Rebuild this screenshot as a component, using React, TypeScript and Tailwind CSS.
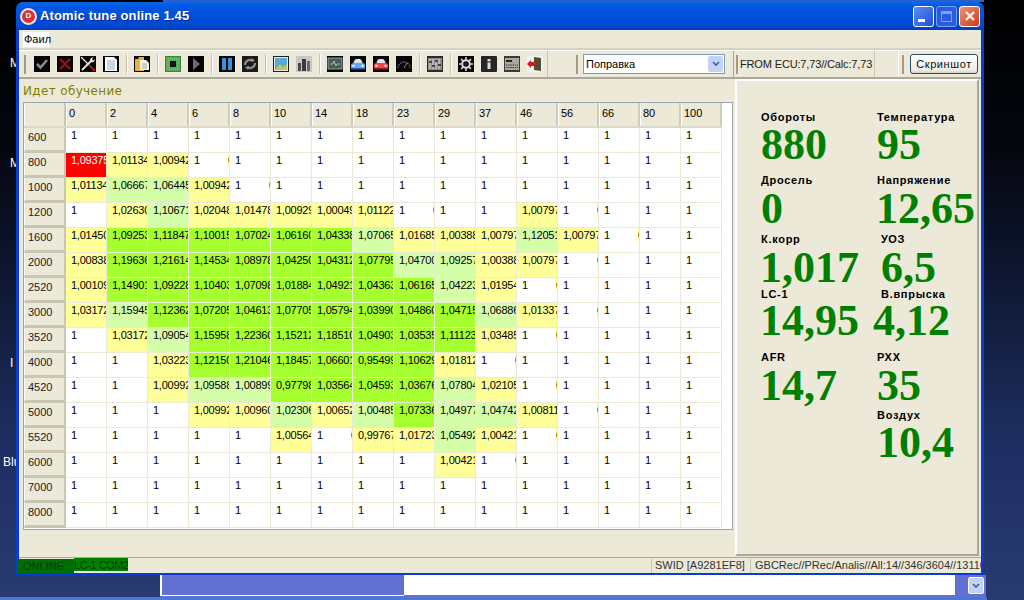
import React from "react";

const headers = ["0","2","4","6","8","10","14","18","23","29","37","46","56","66","80","100"];
type C = [string, string?, number?];
const one = (n: number): C[] => Array.from({ length: n }, () => ["1"] as C);
const rows: [string, C[]][] = [
  ["600", one(16)],
  ["800", [["1,09375","r"],["1,01134","y"],["1,00942","y"],["1",undefined,1],...one(12)]],
  ["1000", [["1,01134","y"],["1,06667","l"],["1,06445","l"],["1,00942","y"],["1",undefined,1],...one(11)]],
  ["1200", [["1"],["1,02630","y"],["1,10671","l"],["1,02048","y"],["1,01478","y"],["1,00929","y"],["1,00049","y"],["1,01122","y"],["1",undefined,1],["1"],["1"],["1,00797","y"],["1",undefined,1],["1"],["1"],["1"]]],
  ["1600", [["1,01450","y"],["1,09253","g"],["1,11847","g"],["1,10015","g"],["1,07024","g"],["1,06160","g"],["1,04338","g"],["1,07065","l"],["1,01685","y"],["1,00388","y"],["1,00797","y"],["1,12051","l"],["1,00797","y"],["1",undefined,1],["1"],["1"]]],
  ["2000", [["1,00838","y"],["1,19636","g"],["1,21614","g"],["1,14534","g"],["1,08978","g"],["1,04250","g"],["1,04312","g"],["1,07795","g"],["1,04700","l"],["1,09257","l"],["1,00388","y"],["1,00797","y"],["1",undefined,1],["1"],["1"],["1"]]],
  ["2520", [["1,00109","y"],["1,14901","g"],["1,09228","g"],["1,10403","g"],["1,07098","g"],["1,01884","g"],["1,04921","g"],["1,04363","g"],["1,06165","g"],["1,04223","l"],["1,01954","y"],["1",undefined,1],["1"],["1"],["1"],["1"]]],
  ["3000", [["1,03172","y"],["1,15945","l"],["1,12362","g"],["1,07205","g"],["1,04613","g"],["1,07705","g"],["1,05794","g"],["1,03990","g"],["1,04860","g"],["1,04715","g"],["1,06886","l"],["1,01337","y"],["1",undefined,1],["1"],["1"],["1"]]],
  ["3520", [["1"],["1,03172","y"],["1,09054","l"],["1,15958","g"],["1,22360","g"],["1,15212","g"],["1,18510","g"],["1,04903","g"],["1,03535","g"],["1,11123","g"],["1,03485","y"],["1",undefined,1],["1"],["1"],["1"],["1"]]],
  ["4000", [["1"],["1"],["1,03223","y"],["1,12150","g"],["1,21046","g"],["1,18457","g"],["1,06601","g"],["0,95499","g"],["1,10629","g"],["1,01812","y"],["1",undefined,1],["1"],["1"],["1"],["1"],["1"]]],
  ["4520", [["1"],["1"],["1,00992","y"],["1,09588","l"],["1,00899","l"],["0,97798","g"],["1,03564","g"],["1,04593","g"],["1,03676","g"],["1,07804","l"],["1,02105","y"],["1",undefined,1],["1"],["1"],["1"],["1"]]],
  ["5000", [["1"],["1"],["1"],["1,00992","y"],["1,00960","y"],["1,02306","l"],["1,00652","y"],["1,00485","l"],["1,07336","g"],["1,04977","l"],["1,04742","l"],["1,00811","y"],["1",undefined,1],["1"],["1"],["1"]]],
  ["5520", [["1"],["1"],["1"],["1"],["1"],["1,00564","y"],["1",undefined,1],["0,99767","y"],["1,01723","y"],["1,05492","l"],["1,00421","y"],["1",undefined,1],["1"],["1"],["1"],["1"]]],
  ["6000", [["1"],["1"],["1"],["1"],["1"],["1"],["1"],["1"],["1"],["1,00421","y"],["1",undefined,1],["1"],["1"],["1"],["1"],["1"]]],
  ["7000", one(16)],
  ["8000", one(16)],
];
const bg: Record<string, string> = {
  r: "bg-[#ff0000] text-white",
  y: "bg-[#ffff99] text-black",
  l: "bg-[#d4ffa8] text-black",
  g: "bg-[#a6ff2e] text-black",
};

function Ico({ n }: { n: string }) {
  const s = "w-4 h-4 shrink-0";
  const box = <rect width="16" height="16" fill="#050505" />;
  switch (n) {
    case "check": return <svg viewBox="0 0 16 16" className={s}>{box}<path d="M3 8l3.5 3.5L13 4" fill="none" stroke="#8a8a8a" strokeWidth="2.6" /></svg>;
    case "x": return <svg viewBox="0 0 16 16" className={s}>{box}<path d="M3 3l10 10M13 3L3 13" fill="none" stroke="#9c1016" strokeWidth="2.4" /></svg>;
    case "tools": return <svg viewBox="0 0 16 16" className={s}>{box}<path d="M1 1l7 7" stroke="#e8e8e8" strokeWidth="1.3" /><path d="M8 8l7 7" stroke="#d81818" strokeWidth="1.6" /><path d="M2 14l9-9" stroke="#e8e8e8" strokeWidth="1.8" /><path d="M10 5a3 3 0 013.5-3.5L12 3.5l1 1 2-1.2A3 3 0 0111 6" fill="#e8e8e8" /></svg>;
    case "doc": return <svg viewBox="0 0 16 16" className={s}>{box}<path d="M2 1h9l3 3v11H2z" fill="#fff" /><path d="M4 5h8M4 7h8M4 9h8M4 11h8M4 13h8" stroke="#9aa8d8" strokeWidth="1" /></svg>;
    case "folder": return <svg viewBox="0 0 16 16" className={s}>{box}<path d="M1 3h3l1-2h5v14H1z" fill="#e8b040" /><path d="M6 4h6l3 3v7H6z" fill="#f4f4ec" /><path d="M8 8h5M8 10h5M8 12h5" stroke="#9ab09a" /></svg>;
    case "chip": return <svg viewBox="0 0 16 16" className={s}><rect width="16" height="16" fill="#2f8a3a" /><rect x="1" y="1" width="14" height="14" fill="#5aa860" /><rect x="5" y="5" width="6" height="6" fill="#151515" /><path d="M3 3h10v10H3z" fill="none" stroke="#bfe0b0" strokeWidth=".6" strokeDasharray="1 1" /></svg>;
    case "play": return <svg viewBox="0 0 16 16" className={s}>{box}<path d="M5 2l7 6-7 6z" fill="#6a6a6a" /></svg>;
    case "pause": return <svg viewBox="0 0 16 16" className={s}>{box}<rect x="3" y="2" width="4" height="12" fill="#3a8ee0" /><rect x="9" y="2" width="4" height="12" fill="#3a8ee0" /></svg>;
    case "refresh": return <svg viewBox="0 0 16 16" className={s}><rect width="16" height="16" fill="#1a1a1a" /><path d="M3 9a5 5 0 018-4M13 7a5 5 0 01-8 4" fill="none" stroke="#8c8c8c" strokeWidth="2.2" /><path d="M10 2l3 3-4 1zM6 14l-3-3 4-1z" fill="#8c8c8c" /></svg>;
    case "image": return <svg viewBox="0 0 16 16" className={s}><rect width="16" height="16" fill="#202020" /><rect x="1" y="1" width="14" height="14" fill="#e8e8e0" /><rect x="2" y="2" width="12" height="12" fill="#58a8d8" /><path d="M2 14l5-6 3 3 4-3v6z" fill="#b8c860" /></svg>;
    case "bars": return <svg viewBox="0 0 16 16" className={s}><rect width="16" height="16" fill="#c8c8c8" /><rect x="2" y="7" width="3" height="8" fill="#4a4a4a" /><rect x="6" y="3" width="4" height="12" fill="#3a3a3a" /><rect x="11" y="5" width="3" height="10" fill="#6a6a6a" /></svg>;
    case "mon": return <svg viewBox="0 0 16 16" className={s}>{box}<rect x="1" y="2" width="14" height="11" fill="#4a5a58" stroke="#c8c8c8" strokeWidth=".7" /><path d="M3 8h3l1-3 2 5 1-2h3" fill="none" stroke="#7fe0a0" strokeWidth=".9" /></svg>;
    case "carb": case "carr": {
      const c = n === "carb" ? "#6aa4ec" : "#ec4a40";
      const d = n === "carb" ? "#2a5ab0" : "#a81818";
      return <svg viewBox="0 0 16 16" className={s}>{box}<path d="M3.5 7q1-4 3-4h3q2 0 3 4z" fill="#dfe4f0" /><path d="M1 9q0-2 3-2h8q3 0 3 2v3H1z" fill={c} /><path d="M1 12h14v1.5H1z" fill={d} /><ellipse cx="3.5" cy="9.7" rx="1.3" ry="1" fill="#fff" /><ellipse cx="12.5" cy="9.7" rx="1.3" ry="1" fill="#fff" /></svg>;
    }
    case "gauge": return <svg viewBox="0 0 16 16" className={s}>{box}<path d="M2 12a6 6 0 0112 0" fill="none" stroke="#6a6a6a" strokeWidth="1.4" strokeDasharray="1.5 1" /><path d="M8 12l3-5" stroke="#888" strokeWidth="1" /></svg>;
    case "sliders": return <svg viewBox="0 0 16 16" className={s}><rect width="16" height="16" fill="#2a2a2a" /><rect x="1" y="2" width="14" height="12" fill="#8c8c8c" /><path d="M3 3v10M6 3v10M9 3v10M12 3v10" stroke="#e8e8e8" strokeWidth=".9" /><path d="M2 6h3M5 10h3M8 5h3M11 9h3" stroke="#222" strokeWidth="1.3" /></svg>;
    case "gear": return <svg viewBox="0 0 16 16" className={s}>{box}<circle cx="8" cy="8" r="3.8" fill="none" stroke="#dcdcdc" strokeWidth="2" /><path d="M8 1v14M1 8h14M3 3l10 10M13 3L3 13" stroke="#dcdcdc" strokeWidth="1.6" strokeDasharray="2.6 8.8" /><circle cx="8" cy="8" r="1.6" fill="#222" /></svg>;
    case "info": return <svg viewBox="0 0 16 16" className={s}><rect width="16" height="16" rx="1" fill="#262626" /><rect x="6.5" y="3" width="3" height="2.4" fill="#e0e0e0" /><rect x="6.5" y="6.5" width="3" height="6.5" fill="#e0e0e0" /></svg>;
    case "card": return <svg viewBox="0 0 16 16" className={s}><rect width="16" height="16" fill="#3a3a3a" /><rect x="1" y="2" width="14" height="12" fill="#a8a8a0" /><rect x="2" y="4" width="6" height="2" fill="#222" /><path d="M2 9h12M2 11.5h12" stroke="#3a3a3a" strokeDasharray="1.4 .8" /></svg>;
    default: return <svg viewBox="0 0 16 16" className={s}><rect width="16" height="16" fill="#f2f2f2" /><path d="M7 1l7 1v13l-7-1z" fill="#505030" /><path d="M0 8l4-4v2h5v4H4v2z" fill="#d81818" /></svg>;
  }
}

const Sep = () => <div className="w-px h-[20px] bg-[#c5c2b0] border-r border-white mx-[3px] box-content" />;
const Grip = () => <div className="w-[2px] h-[19px] shrink-0 [background-image:radial-gradient(#a09c88_1px,transparent_1px)] [background-size:2px_4px]" />;

function Metric({ label, value, lx = 0, vx = 0, vy = 0, h }: { label: string; value: string; lx?: number; vx?: number; vy?: number; h: number }) {
  return (
    <div style={{ height: h }}>
      <div style={{ marginLeft: lx }} className="h-[16px] font-['Liberation_Sans',sans-serif] font-bold text-[11px] leading-[16px] tracking-[0.7px] text-black whitespace-nowrap">{label}</div>
      <div style={{ marginLeft: vx, marginTop: vy }} className="font-['Liberation_Serif',serif] font-bold text-[44px] leading-[42px] text-[#008000] whitespace-nowrap">{value}</div>
    </div>
  );
}

export default function App() {
  return (
    <div className="relative w-[1024px] h-[600px] overflow-hidden bg-[linear-gradient(180deg,#000000_0%,#05070f_25%,#101a38_50%,#1f2f63_75%,#283a70_100%)] font-['Liberation_Sans',sans-serif]">
      {/* desktop bits */}
      <div className="absolute left-[163px] top-0 right-[40px] h-[2px] bg-[#2a5fd0]" />
      <span className="absolute left-[10px] top-[54px] text-[12px] text-white">M</span>
      <span className="absolute left-[10px] top-[154px] text-[12px] text-white">M</span>
      <span className="absolute left-[10px] top-[354px] text-[12px] text-white">I</span>
      <span className="absolute left-[3px] top-[453px] text-[12px] text-white">Blu</span>
      <div className="absolute left-0 right-[37px] bottom-0 h-[3px] bg-[#4a78d8]" />
      <div className="absolute left-[160px] top-[575px] w-[826px] h-[22px] flex bg-[#6071d2]">
        <div className="w-[244px] h-[21px] border-l-2 border-b border-white" />
        <div className="w-[551px] h-[20px] bg-white" />
        <div className="ml-[13px] mt-[2px] w-[16px] h-[17px] rounded-[2px] bg-[#c4d2f6] border border-white flex items-center justify-center">
          <svg viewBox="0 0 8 6" className="w-2 h-[6px]"><path d="M1 1l3 3 3-3" fill="none" stroke="#4a5c90" strokeWidth="1.6" /></svg>
        </div>
      </div>

      {/* window */}
      <div className="absolute left-[16px] top-[2px] w-[968px] h-[573px] flex flex-col rounded-t-[7px] overflow-hidden bg-[#0a3bd6] px-[3px] pb-[2px]">
        <div className="-mx-[3px] h-[28px] shrink-0 flex items-center pl-[4px] pr-[4px] bg-[linear-gradient(180deg,#0a66e8_0%,#0058e0_15%,#0050dc_50%,#0048d0_85%,#0040b8_100%)]">
          <div className="w-[17px] h-[17px] rounded-full bg-[#d8323a] border-2 border-[#f0e8e0] flex items-center justify-center text-[8px] font-bold text-white">D</div>
          <div className="ml-[3px] text-white font-bold text-[13px] tracking-[0.15px] whitespace-nowrap [text-shadow:1px_1px_0_#0a2a90]">Atomic tune online 1.45</div>
          <div className="ml-auto flex gap-[2px]">
            <div className="w-[21px] h-[21px] rounded-[3px] border border-white bg-[linear-gradient(135deg,#5a8cf0,#2050d8)] flex items-end pl-[4px] pb-[4px]"><div className="w-[7px] h-[3px] bg-white" /></div>
            <div className="w-[21px] h-[21px] rounded-[3px] border border-[#7fa0f0] bg-[#2a5ce0] flex items-center justify-center"><div className="w-[11px] h-[11px] border border-[#80a0f0] border-t-[3px]" /></div>
            <div className="w-[21px] h-[21px] rounded-[3px] border border-white bg-[linear-gradient(135deg,#f09070,#d03818)] flex items-center justify-center">
              <svg viewBox="0 0 12 12" className="w-3 h-3"><path d="M2 2l8 8M10 2l-8 8" stroke="#fff" strokeWidth="2.2" /></svg>
            </div>
          </div>
        </div>

        <div className="flex-1 min-h-0 flex flex-col bg-[#ece9d8] text-black">
          {/* menu */}
          <div className="h-[18px] shrink-0 flex items-center pl-[4px]">
            <div className="h-[15px] px-[1px] bg-white text-[11px] leading-[15px] w-[26px]">Фаил</div>
          </div>
          {/* toolbars */}
          <div className="h-[31px] shrink-0 flex items-stretch border-t-2 border-t-[#d5d2c0] border-b-2 border-b-[#aca899]">
            <div className="w-[529px] shrink-0 flex items-center pl-[5px] border-t border-white border-r border-r-[#c9c6b4]">
              <Grip />
              <div className="flex items-center ml-[8px]">
                <div className="flex gap-[7px]"><Ico n="check" /><Ico n="x" /><Ico n="tools" /><Ico n="doc" /></div>
                <div className="ml-[4px]"><Sep /></div>
                <div className="ml-[3px]"><Ico n="folder" /></div>
                <div className="ml-[4px]"><Sep /></div>
                <div className="ml-[3px] flex gap-[7px]"><Ico n="chip" /><Ico n="play" /></div>
                <div className="ml-[4px]"><Sep /></div>
                <div className="ml-[3px] flex gap-[7px]"><Ico n="pause" /><Ico n="refresh" /></div>
                <div className="ml-[4px]"><Sep /></div>
                <div className="ml-[3px] flex gap-[7px]"><Ico n="image" /><Ico n="bars" /></div>
                <div className="ml-[4px]"><Sep /></div>
                <div className="ml-[3px] flex gap-[7px]"><Ico n="mon" /><Ico n="carb" /><Ico n="carr" /><Ico n="gauge" /></div>
                <div className="ml-[4px]"><Sep /></div>
                <div className="ml-[3px]"><Ico n="sliders" /></div>
                <div className="ml-[4px]"><Sep /></div>
                <div className="ml-[3px] flex gap-[7px]"><Ico n="gear" /><Ico n="info" /><Ico n="card" /><Ico n="exit" /></div>
              </div>
            </div>
            <div className="w-[24px] shrink-0 border-t border-white" />
            <div className="w-[162px] shrink-0 flex items-center pl-[4px] border-t border-white border-r border-r-[#aca899]">
              <Grip />
              <div className="ml-[5px] w-[142px] h-[20px] border border-[#7f9db9] bg-white flex items-center pl-[2px] pr-[1px] text-[11px]">
                <span className="flex-1">Поправка</span>
                <div className="w-[15px] h-[16px] rounded-[2px] bg-[#c4d2f6] flex items-center justify-center">
                  <svg viewBox="0 0 8 6" className="w-2 h-[6px]"><path d="M1 1l3 3 3-3" fill="none" stroke="#4a5c90" strokeWidth="1.6" /></svg>
                </div>
              </div>
            </div>
            <div className="w-[141px] shrink-0 flex items-center pl-[2px] border-t border-white border-r border-r-[#c9c6b4]">
              <Grip />
              <span className="ml-[2px] text-[11px] tracking-[-0.15px] text-[#222] whitespace-nowrap">FROM ECU:7,73//Calc:7,73</span>
            </div>
            <div className="w-[23px] shrink-0 border-t border-white" />
            <div className="flex-1 flex items-center pl-[3px] border-t border-white border-l border-l-white">
              <Grip />
              <div className="ml-[6px] w-[68px] h-[20px] rounded-[3px] border border-[#2a4a60] bg-[linear-gradient(180deg,#ffffff,#ecebe5_85%,#d8d0c4)] flex items-center justify-center text-[11px] tracking-[0.6px] text-[#111]">Скриншот</div>
            </div>
          </div>

          {/* main */}
          <div className="flex-1 min-h-0 flex">
            <div className="w-[714px] shrink-0 pl-[4px]">
              <div className="h-[23px] pt-[1px] flex items-center text-[#808000] font-['DejaVu_Sans',sans-serif] text-[12px] font-medium tracking-[0.35px]">Идет обучение</div>
              <div className="w-[710px] h-[428px] border border-[#9aa6ae] bg-white overflow-hidden">
                <div className="flex h-[25px] bg-[#ece9d8] w-[698px] border-b-2 border-[#dcd9c6]">
                  <div className="w-[42px] shrink-0 border-r-2 border-[#c9c6b4] border-l border-l-white" />
                  {headers.map((h) => (
                    <div key={h} className="w-[41px] shrink-0 pl-[2px] pt-[4px] text-[11px] leading-[13px] border-r-2 border-r-[#cfccb8] border-l border-l-white">{h}</div>
                  ))}
                </div>
                {rows.map(([label, cells]) => (
                  <div key={label} className="flex h-[25px]">
                    <div className="w-[42px] shrink-0 pl-[3px] pt-[3px] text-[11px] leading-[13px] bg-[#ece9d8] border-b-[3px] border-b-[#c9c6b4] border-r-2 border-r-[#c9c6b4] border-l border-l-white text-[#222]">{label}</div>
                    {cells.map(([t, k, sl], i) => (
                      <div key={i} className={`w-[41px] h-[25px] shrink-0 flex overflow-hidden pl-[5px] text-[11px] leading-[14px] tracking-[-0.25px] border-r border-b border-[#ece9d8] whitespace-nowrap ${k ? bg[k] : "bg-white text-black"}`}>
                        <span className="flex-1 overflow-hidden">{t}</span>
                        {sl ? <span className="w-[1px] h-[14px] shrink-0 overflow-hidden bg-[#ffff99]">0</span> : null}
                      </div>
                    ))}
                  </div>
                ))}
              </div>
            </div>
            <div className="w-[244px] shrink-0 ml-[2px] mb-[1px] border-l-2 border-t-2 border-l-white border-t-white border-r-2 border-b-2 border-r-[#aca899] border-b-[#aca899] pt-[28px] pl-[24px]">
              <div className="grid grid-cols-[116px_100px]">
                <Metric label="Обороты" value="880" h={63} vy={-1} />
                <Metric label="Температура" value="95" h={63} vy={-1} />
                <Metric label="Дросель" value="0" h={59} />
                <Metric label="Напряжение" value="12,65" h={59} vx={-1} />
                <Metric label="К.корр" value="1,017" h={55} vx={-1} />
                <Metric label="УОЗ" value="6,5" lx={4} vx={4} h={55} />
                <Metric label="LC-1" value="14,95" h={63} vy={-2} vx={-1} />
                <Metric label="В.впрыска" value="4,12" lx={4} vx={-4} h={63} vy={-2} />
                <Metric label="AFR" value="14,7" h={58} vx={-1} />
                <Metric label="РХХ" value="35" h={58} />
                <div />
                <Metric label="Воздух" value="10,4" h={60} vy={-1} />
              </div>
            </div>
          </div>

          {/* status */}
          <div className="h-[16px] shrink-0 flex items-stretch border-t border-[#aca899] text-[11px] text-[#333] leading-[14px]">
            <div className="w-[56px] -ml-px mt-px bg-[#006e00] pl-[5px] text-[#003c00]">ONLINE</div>
            <div className="w-[54px] h-[13px] bg-[#008000] text-[#003c00] tracking-[-0.45px] whitespace-nowrap overflow-hidden">LC-1 COM2</div>
            <div className="ml-auto flex">
              <div className="w-[99px] border-l border-[#c9c6b4] pl-[3px] whitespace-nowrap">SWID [A9281EF8]</div>
              <div className="w-[231px] border-l border-[#c9c6b4] pl-[4px] whitespace-nowrap overflow-hidden">GBCRec//PRec/Analis//All:14//346/3604//13110</div>
            </div>
          </div>
        </div>
      </div>
    </div>
  );
}
